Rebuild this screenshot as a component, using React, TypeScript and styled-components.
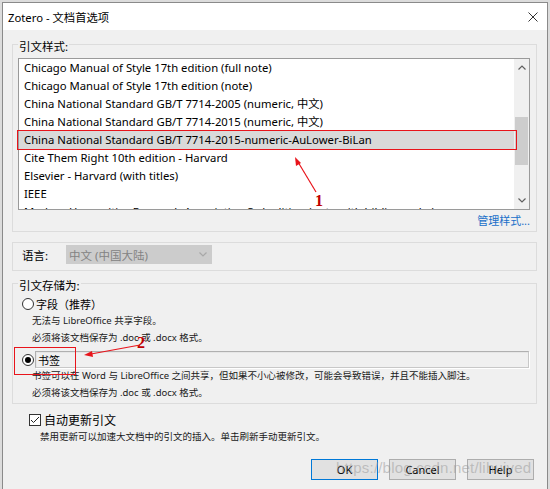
import React from "react";
import styled, { createGlobalStyle } from "styled-components";

const UI_FONT = `"Noto Sans", "Noto Sans CJK SC", sans-serif`;

const GlobalStyle = createGlobalStyle`
  html, body {
    margin: 0;
    padding: 0;
    background: #dcdcdc;
  }
  body {
    font-family: ${UI_FONT};
    color: #000;
  }
  * {
    box-sizing: border-box;
  }
`;

const Page = styled.div`
  position: relative;
  width: 550px;
  height: 489px;
  padding: 2px 2px 0 2px;
  overflow: hidden;
`;

const Window = styled.div`
  display: flex;
  flex-direction: column;
  height: 487px;
  border: 1px solid #8a8a8a;
  border-bottom: none;
  background: #f0f0f0;
`;

const TitleBar = styled.div`
  display: flex;
  align-items: center;
  justify-content: space-between;
  height: 27px;
  padding: 0 9px 0 5px;
  background: #fff;
  font-size: 11.3px;
`;

const Body = styled.div`
  display: flex;
  flex-direction: column;
  flex: 1;
  padding: 4px 10px 0 9px;
`;

const GroupBox = styled.fieldset<{ $mt?: number }>`
  margin: ${(p) => p.$mt ?? 0}px 0 0 0;
  padding: 0;
  min-width: 0;
  border: 1px solid #dcdcdc;
`;

const Legend = styled.legend`
  margin-left: 5px;
  padding: 6px 1px 0;
  font-size: 11.5px;
  line-height: 14px;
`;

const GroupInner = styled.div<{ $pad: string }>`
  display: flex;
  flex-direction: column;
  padding: ${(p) => p.$pad};
`;

const PlainBox = styled.div`
  display: flex;
  align-items: center;
  margin-top: 10px;
  padding: 2px 0 6px 9px;
  border: 1px solid #dcdcdc;
`;

/* style list */
const ListBox = styled.div`
  display: flex;
  height: 152px;
  border: 1px solid #9a9a9a;
  background: #fff;
`;

const Rows = styled.div`
  flex: 1;
  overflow: hidden;
`;

const Row = styled.div<{ $selected?: boolean }>`
  height: 18px;
  line-height: 18px;
  padding-left: 5px;
  white-space: nowrap;
  font-size: 11.3px;
  background: ${(p) => (p.$selected ? "#d9d9d9" : "transparent")};
`;

const ScrollBar = styled.div`
  display: flex;
  flex-direction: column;
  width: 15px;
  background: #f0f0f0;
`;

const ScrollArrow = styled.div`
  display: flex;
  align-items: center;
  justify-content: center;
  height: 17px;
`;

const ScrollTrack = styled.div`
  flex: 1;
`;

const ScrollThumb = styled.div`
  margin: 41px 1px 0;
  height: 48px;
  background: #cdcdcd;
`;

const LinkRow = styled.div`
  display: flex;
  justify-content: flex-end;
  align-items: center;
  height: 20px;
`;

const Link = styled.span`
  font-size: 11px;
  color: #1a6fc9;
`;

/* language */
const FieldLabel = styled.span`
  width: 44px;
  font-size: 11.5px;
`;

const Select = styled.div`
  display: flex;
  align-items: center;
  justify-content: space-between;
  width: 146px;
  height: 19px;
  padding: 0 5px 0 3px;
  background: #cccccc;
  font-size: 11.5px;
  color: #838383;
`;

/* storage */
const OptionRow = styled.div<{ $mt?: number; $h: number }>`
  display: flex;
  align-items: center;
  height: ${(p) => p.$h}px;
  margin-top: ${(p) => p.$mt ?? 0}px;
  font-size: 11px;
`;

const Radio = styled.span<{ $checked?: boolean }>`
  position: relative;
  flex: none;
  width: 12px;
  height: 12px;
  margin-right: 1px;
  border: 1px solid #333;
  border-radius: 50%;
  background: #fff;

  &::after {
    content: "";
    display: ${(p) => (p.$checked ? "block" : "none")};
    position: absolute;
    left: 2px;
    top: 2px;
    width: 6px;
    height: 6px;
    border-radius: 50%;
    background: #000;
  }
`;

const OptionLabel = styled.span`
  margin-left: 1px;
`;

const OptionBox = styled.div`
  display: flex;
  align-items: center;
  flex: 1;
  height: 100%;
  padding-left: 2px;
  border: 1px solid #b0b0b0;
  border-right-color: #c8c8c8;
  border-bottom-color: #c8c8c8;
  box-shadow: inset 1px 1px 0 #e6e6e6, 1px 1px 0 #fff;
`;

const Description = styled.div<{ $indent: number; $lh: number }>`
  padding-left: ${(p) => p.$indent}px;
  font-size: 9.5px;
  line-height: ${(p) => p.$lh}px;
  color: #1a1a1a;
  white-space: nowrap;
`;

const CheckRow = styled.div`
  display: flex;
  align-items: center;
  gap: 3px;
  height: 17px;
  margin: 7px 0 0 17px;
  font-size: 12px;
`;

const CheckBox = styled.span`
  display: flex;
  align-items: center;
  justify-content: center;
  width: 12px;
  height: 12px;
  border: 1px solid #333;
  background: #fff;
`;

const ButtonRow = styled.div`
  display: flex;
  justify-content: flex-end;
  gap: 11px;
  margin-top: 14px;
  padding-right: 3px;
`;

const Button = styled.button<{ $default?: boolean }>`
  width: 67px;
  height: 21px;
  padding: 0;
  border: 1px solid ${(p) => (p.$default ? "#0078d7" : "#adadad")};
  background: #e1e1e1;
  font-family: ${UI_FONT};
  font-size: 11px;
  color: #000;
`;

/* annotations drawn over the screenshot */
const RedBox = styled.div<{ $x: number; $y: number; $w: number; $h: number }>`
  position: absolute;
  left: ${(p) => p.$x}px;
  top: ${(p) => p.$y}px;
  width: ${(p) => p.$w}px;
  height: ${(p) => p.$h}px;
  border: 1.5px solid #e8141b;
  pointer-events: none;
`;

const Marker = styled.span<{ $x: number; $y: number }>`
  position: absolute;
  left: ${(p) => p.$x}px;
  top: ${(p) => p.$y}px;
  font-family: "Liberation Serif", serif;
  font-weight: bold;
  font-size: 16px;
  line-height: 14px;
  color: #c00000;
`;

const ArrowLayer = styled.svg`
  position: absolute;
  left: 0;
  top: 0;
  pointer-events: none;
`;

const Watermark = styled.span`
  position: absolute;
  left: 336px;
  top: 459px;
  font-family: "Liberation Sans", sans-serif;
  font-size: 15px;
  letter-spacing: 0.2px;
  color: rgba(150, 150, 150, 0.5);
  pointer-events: none;
`;

const Chevron: React.FC<{ dir: "up" | "down"; color?: string }> = ({ dir, color = "#606060" }) => (
  <svg width="8" height="5" viewBox="0 0 8 5">
    <polyline
      points={dir === "up" ? "0.5,4.5 4,1 7.5,4.5" : "0.5,0.5 4,4 7.5,0.5"}
      fill="none"
      stroke={color}
      strokeWidth="1.2"
    />
  </svg>
);

const styles = [
  "Chicago Manual of Style 17th edition (full note)",
  "Chicago Manual of Style 17th edition (note)",
  "China National Standard GB/T 7714-2005 (numeric, 中文)",
  "China National Standard GB/T 7714-2015 (numeric, 中文)",
  "China National Standard GB/T 7714-2015-numeric-AuLower-BiLan",
  "Cite Them Right 10th edition - Harvard",
  "Elsevier - Harvard (with titles)",
  "IEEE",
  "Modern Humanities Research Association 3rd edition (note with bibliography)",
];

const App: React.FC = () => {
  return (
    <Page>
      <GlobalStyle />
      <Window>
        <TitleBar>
          <span>Zotero - 文档首选项</span>
          <svg width="10" height="10" viewBox="0 0 10 10">
            <path d="M0.5 0.5L9.5 9.5M9.5 0.5L0.5 9.5" stroke="#333" strokeWidth="1" />
          </svg>
        </TitleBar>
        <Body>
          <GroupBox>
            <Legend>引文样式:</Legend>
            <GroupInner $pad="4px 6px 1px 5px">
              <ListBox>
                <Rows>
                  {styles.map((s, i) => (
                    <Row key={s} $selected={i === 4}>
                      {s}
                    </Row>
                  ))}
                </Rows>
                <ScrollBar>
                  <ScrollArrow>
                    <Chevron dir="up" />
                  </ScrollArrow>
                  <ScrollTrack>
                    <ScrollThumb />
                  </ScrollTrack>
                  <ScrollArrow>
                    <Chevron dir="down" />
                  </ScrollArrow>
                </ScrollBar>
              </ListBox>
              <LinkRow>
                <Link>管理样式...</Link>
              </LinkRow>
            </GroupInner>
          </GroupBox>

          <PlainBox>
            <FieldLabel>语言:</FieldLabel>
            <Select>
              <span>中文 (中国大陆)</span>
              <Chevron dir="down" color="#a8a8a8" />
            </Select>
          </PlainBox>

          <GroupBox $mt={2}>
            <Legend>引文存储为:</Legend>
            <GroupInner $pad="3px 7px 2px 9px">
              <OptionRow $h={16}>
                <Radio />
                <OptionLabel>字段（推荐）</OptionLabel>
              </OptionRow>
              <Description $indent={10} $lh={17}>
                <div>无法与 LibreOffice 共享字段。</div>
                <div>必须将该文档保存为 .doc 或 .docx 格式。</div>
              </Description>
              <OptionRow $h={17} $mt={5}>
                <Radio $checked />
                <OptionBox>书签</OptionBox>
              </OptionRow>
              <Description $indent={10} $lh={16.5}>
                <div>书签可以在 Word 与 LibreOffice 之间共享，但如果不小心被修改，可能会导致错误，并且不能插入脚注。</div>
                <div>必须将该文档保存为 .doc 或 .docx 格式。</div>
              </Description>
            </GroupInner>
          </GroupBox>

          <CheckRow>
            <CheckBox>
              <svg width="10" height="8" viewBox="0 0 10 8">
                <polyline points="1,4 3.5,6.5 9,1" fill="none" stroke="#222" strokeWidth="1" />
              </svg>
            </CheckBox>
            <span>自动更新引文</span>
          </CheckRow>
          <Description $indent={28} $lh={17}>
            禁用更新可以加速大文档中的引文的插入。单击刷新手动更新引文。
          </Description>

          <ButtonRow>
            <Button $default>OK</Button>
            <Button>Cancel</Button>
            <Button>Help</Button>
          </ButtonRow>
        </Body>
      </Window>

      <RedBox $x={17} $y={130} $w={500} $h={20} />
      <RedBox $x={14} $y={347} $w={62} $h={28} />
      <ArrowLayer width="550" height="489" viewBox="0 0 550 489">
        <line x1="316" y1="192" x2="298" y2="162" stroke="#e8141b" strokeWidth="1.2" />
        <polygon points="295,157 296,166 301,163" fill="#e8141b" />
        <line x1="140" y1="345" x2="91" y2="354" stroke="#e8141b" strokeWidth="1.2" />
        <polygon points="84,355 92,351 93,357" fill="#e8141b" />
      </ArrowLayer>
      <Marker $x={315} $y={194}>1</Marker>
      <Marker $x={137} $y={336}>2</Marker>
      <Watermark>https://blog.csdn.net/lihuiyed</Watermark>
    </Page>
  );
};

export default App;
